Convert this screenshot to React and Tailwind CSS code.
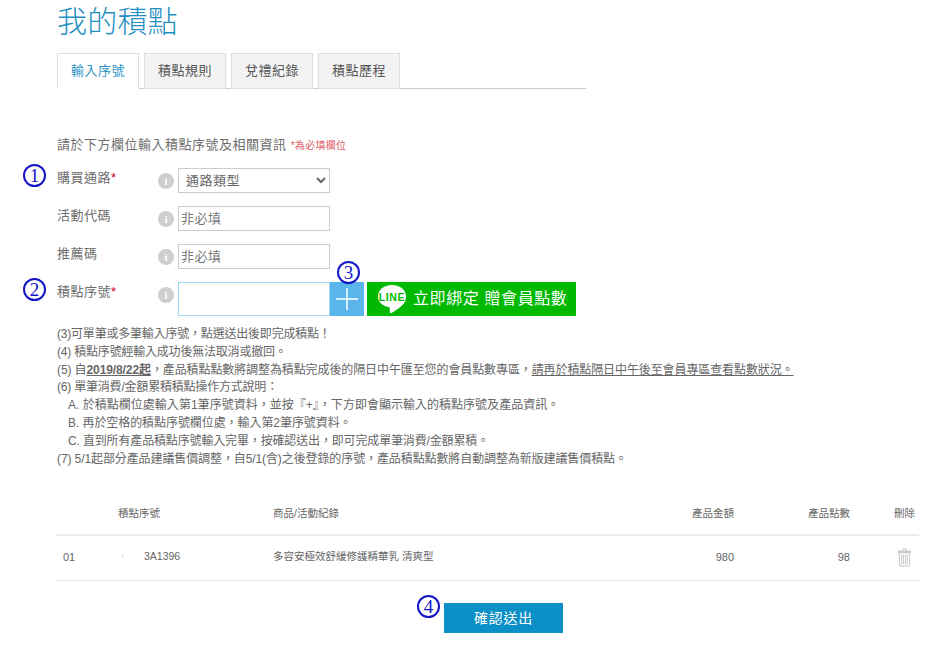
import React from 'react';

const FONT = "font-['Liberation_Sans','Noto_Sans_CJK_TC',sans-serif]";

const InfoDot = () => (
  <span className="w-4 h-4 mt-[5px] mr-1 rounded-full bg-[#cfcfcf] text-white text-[11px] leading-4 font-bold text-center shrink-0 font-['Liberation_Serif',serif]">i</span>
);

// blue circled numbers added on top of the page
const Mark = ({ className, children }) => (
  <span className={`absolute w-[23px] h-[23px] rounded-full border-2 border-[#1414c8] flex items-center justify-center text-[19px] leading-none text-[#1414c8] font-['Liberation_Serif',serif] ${className}`}>{children}</span>
);

const LineLogo = () => (
  <svg width="32" height="32" viewBox="0 0 32 32" className="shrink-0">
    <path d="M16 2C7.700 2 2 7 2 13.400c0 5.700 4.600 9.600 10.600 10.600.8.200 1 .5 1.100 1.200l.2 4.300c0 .8.600 1 1.300.6 2.200-1.500 9.600-5.500 13-10.200 1.200-1.800 1.800-3.700 1.800-6.500C30 7 24.300 2 16 2z" fill="#fff" />
    <text x="16" y="17.500" textAnchor="middle" fontSize="10.500" fontWeight="700" fill="#00b900" fontFamily="Liberation Sans, sans-serif">LINE</text>
  </svg>
);

const TrashIcon = () => (
  <svg width="13" height="19" viewBox="0 0 14 20" fill="none" stroke="#c4c4c4" strokeWidth="1">
    <path d="M5 2.500V.8h4v1.700" />
    <path d="M.5 3h13v1.800H.500z" fill="#d4d4d4" />
    <path d="M1.500 5v14.300h11V5" />
    <path d="M4 6.500v11M6 6.500v11M8 6.500v11M10 6.500v11" />
  </svg>
);

const FormRow = ({ label, required, height, children }) => (
  <div className="flex" style={{ height }}>
    <div className="w-[101px] text-[13px] tracking-[0.5px] leading-5 text-[#6e6e6e]">
      {label}{required && <span className="text-[#d0021b]">*</span>}
    </div>
    <InfoDot />
    {children}
  </div>
);

const fieldClass = "w-[152px] h-[25px] border border-[#ccc] bg-white px-[2px] text-[13px] tracking-[0.5px] text-[#666] placeholder:text-[#777] outline-none";

const tabs = ['輸入序號', '積點規則', '兌禮紀錄', '積點歷程'];

export default function App() {
  return (
    <div className={`relative w-[940px] h-[645px] overflow-hidden bg-white pl-[57px] text-[#666] ${FONT}`}>
      {/* Title */}
      <h1 className="h-[53px] pt-[3px] text-[30px] leading-[38px] tracking-[0.2px] font-light text-[#1f8fc4]">我的積點</h1>

      {/* Tabs */}
      <div className="w-[529px] h-[36px] flex gap-[5px] border-b border-[#ccc]">
        {tabs.map((tab, i) => (
          <div
            key={tab}
            className={`w-[82px] h-[36px] border text-[13px] tracking-[0.5px] leading-[34px] text-center ${i === 0 ? 'bg-white border-[#ddd] border-b-white text-[#2a93c4]' : 'bg-[#f3f3f3] border-[#ddd] text-[#555]'}`}
          >
            {tab}
          </div>
        ))}
      </div>

      {/* Intro */}
      <p className="mt-[46px] h-[20px] text-[13px] tracking-[0.5px] leading-5 text-[#6e6e6e]">
        請於下方欄位輸入積點序號及相關資訊 <span className="text-[10px] tracking-[0.3px] text-[#e0606a]">*為必填欄位</span>
      </p>

      {/* Form */}
      <div className="mt-[13px]">
        <FormRow label="購買通路" required height="38px">
          <select className={`${fieldClass} !px-[3px]`} defaultValue="type">
            <option value="type">通路類型</option>
          </select>
        </FormRow>
        <FormRow label="活動代碼" height="38px">
          <input className={fieldClass} placeholder="非必填" />
        </FormRow>
        <FormRow label="推薦碼" height="38px">
          <input className={fieldClass} placeholder="非必填" />
        </FormRow>
        <FormRow label="積點序號" required height="34px">
          <input className="w-[152px] h-[34px] border border-[#9fd8f3] bg-white outline-none" />
          <div className="w-[34px] h-[34px] bg-[#5ab6ea] flex items-center justify-center">
            <svg width="22" height="22" viewBox="0 0 22 22" stroke="#fff" strokeWidth="1.500"><path d="M11 0v22M0 11h22" /></svg>
          </div>
          <div className="ml-[3px] w-[209px] h-[34px] bg-[#00b900] flex items-center gap-[5px] pl-[9px] text-white text-[16px] tracking-[0.6px]">
            <LineLogo />
            立即綁定 贈會員點數
          </div>
        </FormRow>
      </div>

      {/* Notes */}
      <div className="mt-[10px] text-[12px] leading-[17.800px] text-[#666] whitespace-nowrap">
        <div className="tracking-[-0.2px]">(3)可單筆或多筆輸入序號，點選送出後即完成積點！</div>
        <div className="tracking-[-0.2px]">(4) 積點序號經輸入成功後無法取消或撤回。</div>
        <div className="tracking-[-0.1px]">
          (5) 自<b className="underline">2019/8/22起</b>，產品積點點數將調整為積點完成後的隔日中午匯至您的會員點數專區，<span className="underline">請再於積點隔日中午後至會員專區查看點數狀況。</span>
        </div>
        <div className="tracking-[-0.2px]">(6) 單筆消費/金額累積積點操作方式說明：</div>
        <div className="pl-[11px] tracking-[0.02px]">A. 於積點欄位處輸入第1筆序號資料，並按『+』，下方即會顯示輸入的積點序號及產品資訊。</div>
        <div className="pl-[11px] tracking-[-0.07px]">B. 再於空格的積點序號欄位處，輸入第2筆序號資料。</div>
        <div className="pl-[11px] tracking-[-0.15px]">C. 直到所有產品積點序號輸入完畢，按確認送出，即可完成單筆消費/金額累積。</div>
        <div className="tracking-[-0.1px]">(7) 5/1起部分產品建議售價調整，自5/1(含)之後登錄的序號，產品積點點數將自動調整為新版建議售價積點。</div>
      </div>

      {/* Table */}
      <div className="mt-[25px] w-[863px] -ml-[1px] text-[10.500px] text-[#666]">
        <div className="h-[43px] pb-[1px] flex items-center border-b-2 border-[#eee] whitespace-nowrap">
          <span className="w-[62px]" />
          <span className="w-[155px]">積點序號</span>
          <span className="flex-1">商品/活動紀錄</span>
          <span className="w-[60px] text-right">產品金額</span>
          <span className="w-[116px] text-right">產品點數</span>
          <span className="w-[69px] pl-[44px]">刪除</span>
        </div>
        <div className="h-[45px] pb-[3px] flex items-center border-b border-[#e5e5e5]">
          <span className="w-[62px] pl-[7px] text-[11px]">01</span>
          <span className="w-[155px] flex items-center pl-[3px]">
            <span className="w-[3px] h-[3px] mr-[20px] bg-[#eeeeee]" />
            <span className="text-[10.500px]">3A1396</span>
          </span>
          <span className="flex-1">多容安極效舒緩修護精華乳 清爽型</span>
          <span className="w-[60px] text-right text-[11px]">980</span>
          <span className="w-[116px] text-right text-[11px]">98</span>
          <span className="w-[69px] pl-[48px] pt-[2px] flex"><TrashIcon /></span>
        </div>
      </div>

      {/* Submit */}
      <div className="mt-[22px] ml-[387px] w-[119px] h-[30px] bg-[#0a8fc7] text-white text-[14px] tracking-[0.8px] leading-[30px] text-center">確認送出</div>

      {/* Annotation marks */}
      <Mark className="left-[23px] top-[164px]">1</Mark>
      <Mark className="left-[23px] top-[278px]">2</Mark>
      <Mark className="left-[337px] top-[261px]">3</Mark>
      <Mark className="left-[417px] top-[595px]">4</Mark>
    </div>
  );
}
